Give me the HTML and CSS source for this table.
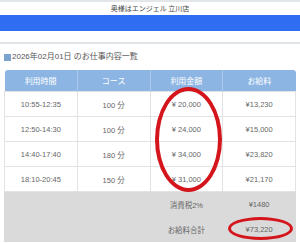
FILE: index.html
```html
<!DOCTYPE html>
<html lang="ja">
<head>
<meta charset="utf-8">
<link rel="stylesheet" href="styles.css">
</head>
<body>
<header class="site-header">
  <div class="site-title">奥様はエンジェル 立川店</div>
  <div class="nav-bar"></div>
</header>
<div class="divider"></div>
<main class="content">
  <h2 class="heading"><span class="square"></span>2026年02月01日 のお仕事内容一覧</h2>
  <div class="table-wrap">
    <table class="work-table">
      <thead>
        <tr><th>利用時間</th><th>コース</th><th>利用金額</th><th>お給料</th></tr>
      </thead>
      <tbody>
        <tr><td>10:55-12:35</td><td>100 分</td><td>¥ 20,000</td><td>¥13,230</td></tr>
        <tr><td>12:50-14:30</td><td>100 分</td><td>¥ 24,000</td><td>¥15,000</td></tr>
        <tr><td>14:40-17:40</td><td>180 分</td><td>¥ 34,000</td><td>¥23,820</td></tr>
        <tr><td>18:10-20:45</td><td>150 分</td><td>¥ 31,000</td><td>¥21,170</td></tr>
        <tr class="summary"><td></td><td></td><td>消費税2%</td><td>¥1480</td></tr>
        <tr class="summary"><td></td><td></td><td>お給料合計</td><td>¥73,220</td></tr>
      </tbody>
    </table>
    <div class="mark mark-amounts"></div>
    <div class="mark mark-total"></div>
  </div>
</main>
</body>
</html>
```
FILE: styles.css
```css
html, body {
  margin: 0;
  padding: 0;
  background: #ffffff;
}
body {
  width: 300px;
  font-family: "Liberation Sans", "Noto Sans CJK JP", sans-serif;
  color: #666666;
}
.site-header {
  border-top: 2px solid #e4e7e9;
}
.site-title {
  height: 13px;
  line-height: 12px;
  font-size: 7px;
  text-align: center;
  color: #444444;
  font-family: "Noto Sans CJK JP", sans-serif;
}
.nav-bar {
  height: 16px;
  background: #2f6ef2;
}
.divider {
  margin-top: 11px;
  height: 2px;
  background: #e0e4e7;
}
.content {
  padding: 0 4px;
}
.heading {
  margin: 7px 0 0 0;
  height: 12px;
  line-height: 12px;
  font-size: 8px;
  font-weight: normal;
  color: #555555;
  display: flex;
  align-items: center;
  font-family: "Liberation Sans", "Noto Sans CJK JP", sans-serif;
}
.square {
  width: 7px;
  height: 7px;
  background: #7aa3cf;
  margin-right: 1px;
}
.table-wrap {
  position: relative;
  margin-top: 7px;
  width: 292px;
}
.work-table {
  width: 292px;
  border-collapse: collapse;
  table-layout: fixed;
  font-size: 7.5px;
}
.work-table th {
  height: 21px;
  padding: 0;
  background: #8cb5e3;
  color: #ffffff;
  font-weight: normal;
  font-size: 8px;
  font-family: "Noto Sans CJK JP", sans-serif;
  border-left: 1px solid #a9c8ea;
}
.work-table th:first-child {
  border-left: none;
  border-top-left-radius: 3px;
}
.work-table th:last-child {
  border-top-right-radius: 3px;
}
.work-table td {
  height: 24px;
  padding: 0;
  text-align: center;
  border: 1px solid #e3e3e3;
  color: #666666;
}
.work-table tr.summary td {
  background: #dadada;
  border-color: #dadada;
  font-family: "Liberation Sans", "Noto Sans CJK JP", sans-serif;
}
.mark {
  position: absolute;
  border-radius: 50%;
  border-style: solid;
  border-color: #d4151c;
  box-sizing: border-box;
}
.mark-amounts {
  left: 151px;
  top: 17px;
  width: 67px;
  height: 105px;
  border-width: 4px;
}
.mark-total {
  left: 224px;
  top: 147px;
  width: 65px;
  height: 23px;
  border-width: 3px;
}
```
